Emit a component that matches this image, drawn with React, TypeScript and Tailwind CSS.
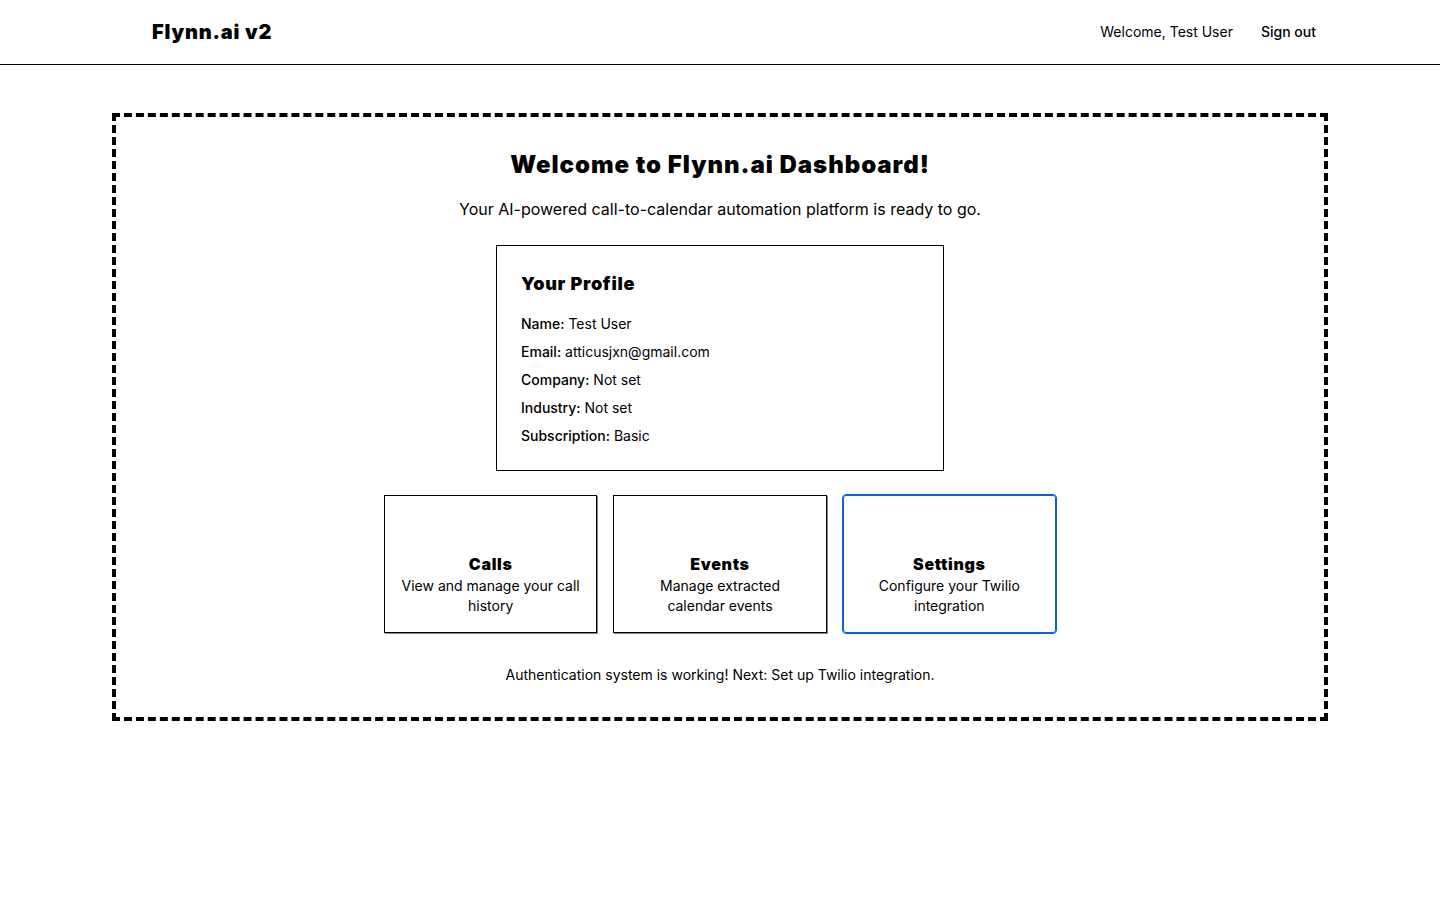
import React from 'react'

const HEAD = "font-['Inter',sans-serif] font-black tracking-[0.04em]"

const PROFILE: [string, string][] = [
  ['Name', 'Test User'],
  ['Email', 'atticusjxn@gmail.com'],
  ['Company', 'Not set'],
  ['Industry', 'Not set'],
  ['Subscription', 'Basic'],
]

const LINKS = [
  { title: 'Calls', desc: 'View and manage your call history', active: false },
  { title: 'Events', desc: 'Manage extracted calendar events', active: false },
  { title: 'Settings', desc: 'Configure your Twilio integration', active: true },
]

export default function App() {
  return (
    <div className="min-h-screen bg-white text-black font-['Inter',sans-serif]">
      {/* Nav */}
      <nav className="border-b border-black">
        <div className="max-w-7xl mx-auto px-8 h-16 flex items-center justify-between">
          <div className={`${HEAD} text-xl pl-10`}>Flynn.ai v2</div>
          <div className="flex items-center gap-4">
            <span className="text-sm">Welcome, Test User</span>
            <button className="text-sm font-medium px-3 py-2">Sign out</button>
          </div>
        </div>
      </nav>

      {/* Main */}
      <main className="max-w-7xl mx-auto px-8 py-12">
        <div className="border-4 border-dashed border-black p-8 text-center">
          <h1 className={`${HEAD} text-2xl`}>Welcome to Flynn.ai Dashboard!</h1>
          <p className="mt-4 text-base">Your AI-powered call-to-calendar automation platform is ready to go.</p>

          <div className="mt-6 max-w-md mx-auto border border-black p-6 text-left">
            <h2 className={`${HEAD} text-lg mb-4`}>Your Profile</h2>
            <div className="space-y-2 text-sm">
              {PROFILE.map(([k, v]) => (
                <p key={k}>
                  <span className="font-medium">{k}:</span> {v}
                </p>
              ))}
            </div>
          </div>

          <div className="mt-6 max-w-2xl mx-auto grid grid-cols-3 gap-4">
            {LINKS.map((l) => (
              <div
                key={l.title}
                className={
                  l.active
                    ? 'border border-[#0b5fd0] outline outline-1 outline-[#0b5fd0] rounded-[3px] p-4'
                    : 'border border-black p-4 shadow-[1px_1px_0_#888]'
                }
              >
                <div className="h-10" />
                <h3 className={`${HEAD} text-base`}>{l.title}</h3>
                <p className="text-sm">{l.desc}</p>
              </div>
            ))}
          </div>

          <p className="mt-8 text-sm">Authentication system is working! Next: Set up Twilio integration.</p>
        </div>
      </main>
    </div>
  )
}
